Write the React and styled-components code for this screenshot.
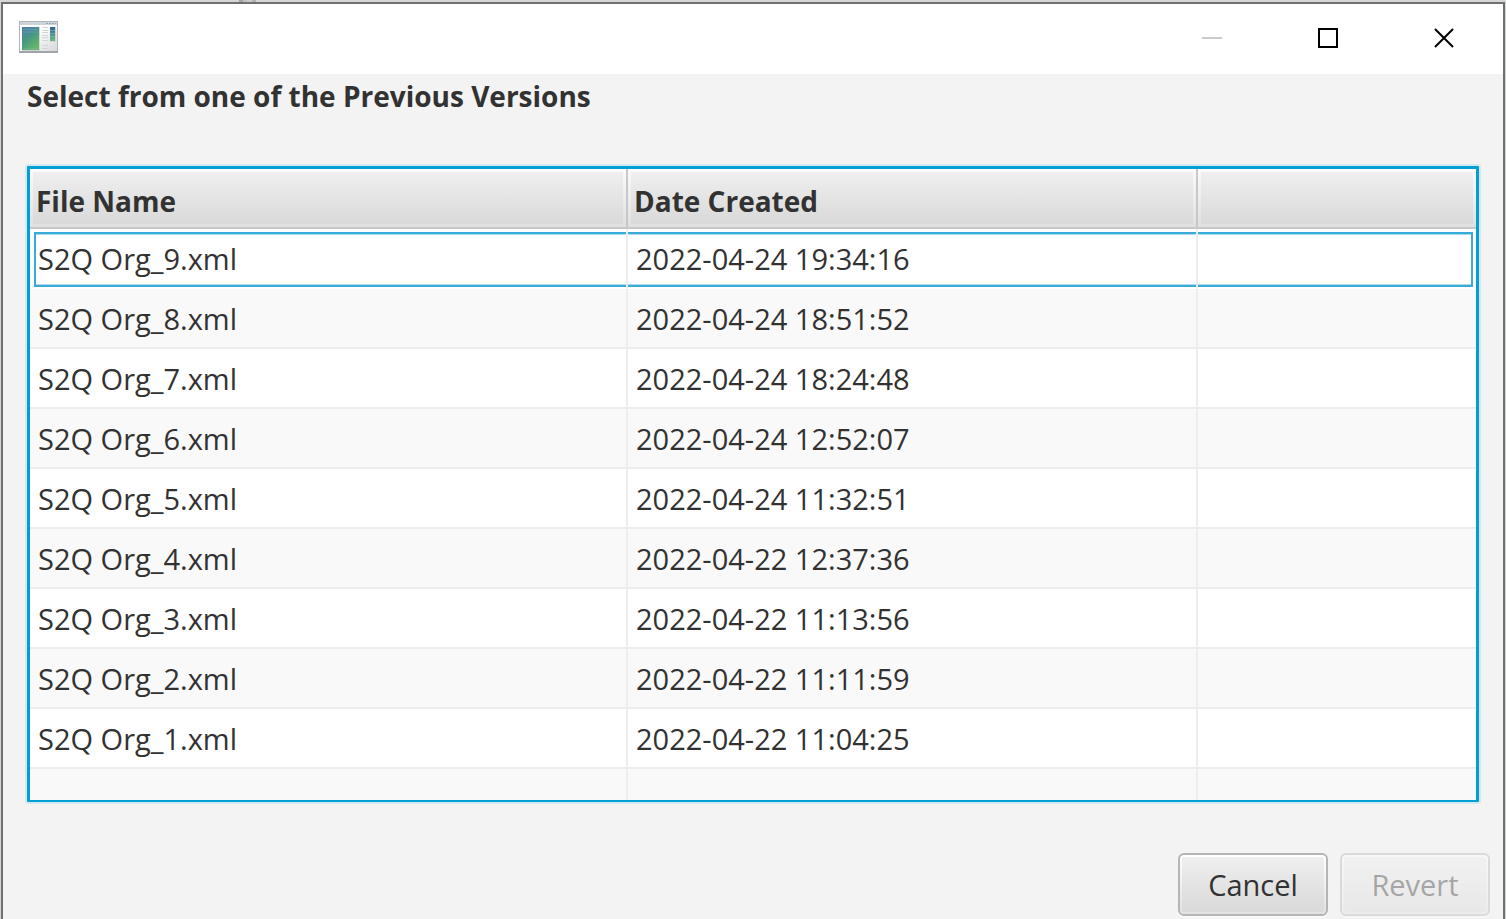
import { useState } from "react";
import styled, { createGlobalStyle } from "styled-components";

const GlobalStyle = createGlobalStyle`
  body {
    margin: 0;
    color: #323232;
    font-family: "Open Sans", "Noto Sans", sans-serif;
    font-size: 29px;
    line-height: 40px;
  }
  * {
    box-sizing: border-box;
  }
`;

const Desktop = styled.div`
  display: flex;
  min-height: 100vh;
  padding: 2px 1px 0;
  background: linear-gradient(
      90deg,
      #a4a4a4 0 4px,
      #bcbcbc 4px,
      #d0d0d0 13px,
      #b0b0b0 13px 17px
    )
    239px 0 / 17px 2px no-repeat #d6d6d6;
`;

const Window = styled.div`
  flex: 1;
  display: flex;
  flex-direction: column;
  border: 2px solid #6e7071;
  border-bottom: none;
  background: #f3f3f3;
`;

const TitleBar = styled.header`
  display: flex;
  align-items: center;
  justify-content: space-between;
  height: 70px;
  padding: 0 1px 2px 16px;
  background: white;
`;

const Controls = styled.div`
  display: flex;
  height: 68px;
`;

const ControlButton = styled.button`
  display: flex;
  align-items: center;
  justify-content: center;
  width: 116px;
  padding: 0;
  border: none;
  background: white;
  color: ${(props) => (props.disabled ? "#cccccc" : "#000000")};
`;

const Content = styled.main`
  flex: 1;
  display: flex;
  flex-direction: column;
  padding: 2px 24px 0;
`;

const Title = styled.h1`
  margin: 0;
  font-size: 28px;
  font-weight: 700;
  line-height: 40px;
`;

const TableFrame = styled.div`
  margin-top: 50px;
  border: 3px solid #039ed3;
  border-bottom-width: 2px;
  border-radius: 1px;
  box-shadow: 0 0 0 2px #d3e8ef;
  background: white;
`;

const Table = styled.table`
  width: 100%;
  table-layout: fixed;
  border-collapse: separate;
  border-spacing: 0;
`;

const HeadCell = styled.th`
  width: ${(props) => props.$width || "auto"};
  height: 60px;
  padding: 3px;
  border-right: ${(props) => (props.$last ? "none" : "2px solid #c8c8c8")};
  border-bottom: 2px solid #c8c8c8;
  background:
    linear-gradient(#efefef, #d9d9d9) content-box,
    linear-gradient(#fbfbfb, #e0e0e0) padding-box;
  font-size: 28px;
  font-weight: 700;
  text-align: left;
`;

const HeadLabel = styled.div`
  padding: 9px 3px 3px;
`;

const Row = styled.tr`
  background: ${(props) => (props.$odd ? "#f9f9f9" : "#ffffff")};
`;

const Cell = styled.td`
  height: 60px;
  padding: 3px 0 0;
  border-right: 2px solid #ededed;
  border-bottom: 2px solid ${(props) => (props.$focused ? "#ffffff" : "#ededed")};

  &:last-child {
    border-right: none;
  }
`;

const CellBox = styled.div`
  height: 55px;
  padding: 5px 8px;
  border: 0 solid ${(props) => (props.$focused ? "#39abd8" : "transparent")};
  border-width: 2px 0;
  box-shadow: ${(props) =>
    props.$focused ? "inset 0 1px 0 #a9dbee, inset 0 -1px 0 #a9dbee" : "none"};

  ${Cell}:first-child & {
    margin-left: 4px;
    padding-left: 2px;
    border-left-width: 2px;
  }

  ${Cell}:last-child & {
    margin-right: 3px;
    border-right-width: 2px;
  }
`;

const FillerCell = styled.td`
  height: 31px;
  padding: 0;
  border-right: 2px solid #ededed;

  &:last-child {
    border-right: none;
  }
`;

const Actions = styled.footer`
  display: flex;
  justify-content: flex-end;
  gap: 12px;
  padding: 51px 13px 3px;
`;

const ActionButton = styled.button`
  width: 150px;
  height: 63px;
  padding: 2px;
  border: 2px solid #b5b5b5;
  border-radius: 6px;
  background:
    linear-gradient(#efefef, #d9d9d9) content-box,
    linear-gradient(#ffffff, #e2e2e2) padding-box;
  box-shadow: 0 2px 0 #fafafa;
  color: #323232;
  font: inherit;
  opacity: ${(props) => (props.disabled ? 0.4 : 1)};
`;

const versions = [
  { name: "S2Q Org_9.xml", created: "2022-04-24 19:34:16" },
  { name: "S2Q Org_8.xml", created: "2022-04-24 18:51:52" },
  { name: "S2Q Org_7.xml", created: "2022-04-24 18:24:48" },
  { name: "S2Q Org_6.xml", created: "2022-04-24 12:52:07" },
  { name: "S2Q Org_5.xml", created: "2022-04-24 11:32:51" },
  { name: "S2Q Org_4.xml", created: "2022-04-22 12:37:36" },
  { name: "S2Q Org_3.xml", created: "2022-04-22 11:13:56" },
  { name: "S2Q Org_2.xml", created: "2022-04-22 11:11:59" },
  { name: "S2Q Org_1.xml", created: "2022-04-22 11:04:25" },
];

const AppIcon = () => (
  <svg width="40" height="34" viewBox="0 0 40 34" aria-hidden="true">
    <defs>
      <linearGradient id="panel" x1="0" y1="0" x2="0.6" y2="1">
        <stop offset="0" stopColor="#4478a8" />
        <stop offset="0.5" stopColor="#469783" />
        <stop offset="1" stopColor="#67b56b" />
      </linearGradient>
      <linearGradient id="strip" x1="0" y1="0" x2="0" y2="1">
        <stop offset="0" stopColor="#33609b" />
        <stop offset="1" stopColor="#69bd80" />
      </linearGradient>
      <linearGradient id="page" x1="0" y1="0" x2="1" y2="1">
        <stop offset="0.4" stopColor="#ffffff" />
        <stop offset="1" stopColor="#d5d6d8" />
      </linearGradient>
    </defs>
    <rect x="0.5" y="0.5" width="38" height="31" fill="url(#page)" stroke="#b0b5ba" />
    <rect x="1" y="1" width="37" height="3" fill="#cdd5dc" />
    <path d="M27 2.5h10" stroke="#9aa3aa" strokeDasharray="2 1" />
    <path d="M0 31h39" stroke="#a0a5aa" strokeWidth="2" />
    <rect x="3" y="6" width="18" height="24" fill="#d2d6d8" />
    <rect x="3" y="6" width="17" height="23" fill="url(#panel)" />
    <path d="M3 18C7 13 13 12 20 12V6H3z" fill="#5486b5" opacity="0.35" />
    <path d="M4 8.5h15M4 11h15M4 27.5h15" stroke="#8ec3b7" opacity="0.3" />
    <path
      d="M23 6.5h6M23 9.5h6M23 11.5h6M23 14.5h6M23 16.5h6M23 19.5h6M23 24.5h6M23 27.5h6"
      stroke="#d2d4d5"
    />
    <rect x="31" y="6" width="6" height="15" fill="#cfd5d4" />
    <rect x="31" y="6" width="5" height="14" fill="url(#strip)" />
    <path d="M31 9.5h5M31 12.5h5M31 15.5h5" stroke="#8abcc0" opacity="0.5" />
  </svg>
);

const App = () => {
  const [focused, setFocused] = useState(0);

  return (
    <Desktop>
      <GlobalStyle />
      <Window>
        <TitleBar>
          <AppIcon />
          <Controls>
            <ControlButton aria-label="Minimize" disabled>
              <svg width="20" height="20" viewBox="0 0 20 20">
                <path d="M0 10h20" stroke="currentColor" strokeWidth="2" />
              </svg>
            </ControlButton>
            <ControlButton aria-label="Maximize">
              <svg width="20" height="20" viewBox="0 0 20 20">
                <path d="M1 1h18v18H1z" fill="none" stroke="currentColor" strokeWidth="2" />
              </svg>
            </ControlButton>
            <ControlButton aria-label="Close">
              <svg width="20" height="20" viewBox="0 0 20 20">
                <path d="M1 1l18 18M19 1L1 19" stroke="currentColor" strokeWidth="2" />
              </svg>
            </ControlButton>
          </Controls>
        </TitleBar>
        <Content>
          <Title>Select from one of the Previous Versions</Title>
          <TableFrame>
            <Table>
              <thead>
                <tr>
                  <HeadCell $width="598px">
                    <HeadLabel>File Name</HeadLabel>
                  </HeadCell>
                  <HeadCell $width="570px">
                    <HeadLabel>Date Created</HeadLabel>
                  </HeadCell>
                  <HeadCell $last>
                    <HeadLabel>&nbsp;</HeadLabel>
                  </HeadCell>
                </tr>
              </thead>
              <tbody>
                {versions.map((version, i) => (
                  <Row key={version.name} $odd={i % 2 === 1} onClick={() => setFocused(i)}>
                    <Cell $focused={focused === i}>
                      <CellBox $focused={focused === i}>{version.name}</CellBox>
                    </Cell>
                    <Cell $focused={focused === i}>
                      <CellBox $focused={focused === i}>{version.created}</CellBox>
                    </Cell>
                    <Cell $focused={focused === i}>
                      <CellBox $focused={focused === i} />
                    </Cell>
                  </Row>
                ))}
                <Row $odd>
                  <FillerCell />
                  <FillerCell />
                  <FillerCell />
                </Row>
              </tbody>
            </Table>
          </TableFrame>
        </Content>
        <Actions>
          <ActionButton>Cancel</ActionButton>
          <ActionButton disabled>Revert</ActionButton>
        </Actions>
      </Window>
    </Desktop>
  );
};

export default App;
